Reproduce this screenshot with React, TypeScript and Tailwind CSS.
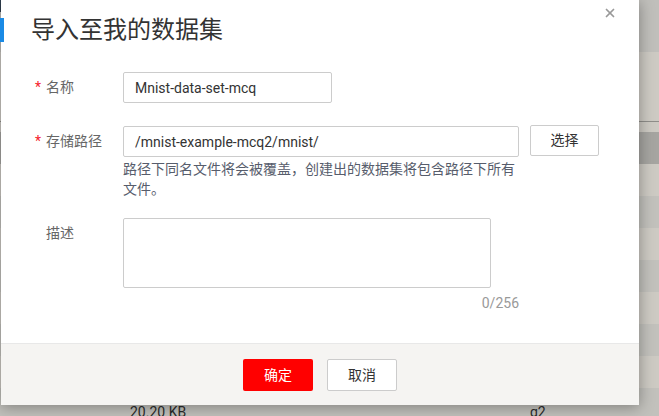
import { X } from "lucide-react";

const font = { fontFamily: '"Roboto", "Noto Sans CJK SC", sans-serif' };

const bgRows = [
  "bg-[#c0bfbb] h-[52px]",
  "bg-[#cdcac3] h-[69px]",
  "bg-[#8f8e8a] h-px",
  "bg-[#cdcac3] h-[10px]",
  "bg-[#a6a5a1] h-[32px]",
  "bg-[#cdcac3] h-[32px]",
  "bg-[#c2c1bc] h-[32px]",
  "bg-[#cdcac3] h-[32px]",
  "bg-[#c2c1bc] h-[32px]",
  "bg-[#cdcac3] h-[32px]",
  "bg-[#c2c1bc] h-[32px]",
  "bg-[#cdcac3] h-[32px]",
];

function Label({ text, required }: { text: string; required?: boolean }) {
  return (
    <div className="flex h-[31px] w-[88px] shrink-0 items-center text-[14px] text-[#666]">
      <span className="w-[11px] text-[#f5222d]">{required ? "*" : ""}</span>
      <span>{text}</span>
    </div>
  );
}

export default function App() {
  return (
    <div className="relative h-[416px] w-[659px] overflow-hidden bg-[#c2c1bc]" style={font}>
      {/* dimmed page behind the dialog */}
      <div className="flex flex-col">
        {bgRows.map((cls, i) => (
          <div key={i} className={cls} />
        ))}
        <div className="relative h-[32px] bg-[#c2c1bc] text-[14px] leading-[20px] text-[#2b2b2b]">
          <span className="absolute left-[130px] top-[14px]">20.20 KB</span>
          <span className="absolute left-[530px] top-[14px]">g2</span>
        </div>
      </div>
      <div className="absolute left-0 top-0 h-[12px] w-px bg-[#2f3e4e]" />

      {/* dialog */}
      <div className="absolute left-px top-0 flex h-[405px] w-[638px] flex-col bg-white shadow-[0_2px_14px_rgba(0,0,0,0.35)]">
        <div className="absolute left-[-1px] top-[18px] h-[24px] w-[4px] bg-[#1a8ae5]" />
        <button className="absolute right-[22px] top-[6px] text-[#999]" aria-label="关闭">
          <X size={14} strokeWidth={3} />
        </button>

        <div className="flex-1 px-[34px] pt-[18px]">
          <h2 className="-ml-[4px] text-[24px] leading-[24px] text-[#333]">导入至我的数据集</h2>

          <div className="mt-[30px] flex">
            <Label text="名称" required />
            <input
              className="h-[31px] w-[209px] rounded-[2px] border border-[#ccc] px-[11px] text-[14px] text-[#333] outline-none"
              defaultValue="Mnist-data-set-mcq"
            />
          </div>

          <div className="mt-[23px] flex">
            <Label text="存储路径" required />
            <div className="w-[396px]">
              <input
                className="h-[31px] w-full rounded-[2px] border border-[#ccc] px-[11px] text-[14px] text-[#333] outline-none"
                defaultValue="/mnist-example-mcq2/mnist/"
              />
              <p className="mt-[2px] text-[14px] leading-[20px] text-[#575d6c]">
                路径下同名文件将会被覆盖，创建出的数据集将包含路径下所有文件。
              </p>
            </div>
            <button className="-mt-px ml-[11px] h-[31px] w-[69px] rounded-[2px] border border-[#ccc] bg-white text-[14px] text-[#333]">
              选择
            </button>
          </div>

          <div className="mt-[19px] flex">
            <Label text="描述" />
            <div className="w-[396px]">
              <textarea className="block h-[70px] w-[368px] resize-none rounded-[2px] border border-[#ccc] outline-none" />
              <div className="mt-[6px] text-right text-[14px] leading-[18px] text-[#999]">0/256</div>
            </div>
          </div>
        </div>

        <div className="flex h-[62px] items-start justify-center gap-[14px] border-t border-[#e8e8e8] bg-[#f5f4f2] pt-[15px]">
          <button className="h-[32px] w-[70px] rounded-[2px] bg-[#ff0000] text-[14px] text-white">确定</button>
          <button className="h-[32px] w-[70px] rounded-[2px] border border-[#ccc] bg-white text-[14px] text-[#333]">
            取消
          </button>
        </div>
      </div>
    </div>
  );
}
